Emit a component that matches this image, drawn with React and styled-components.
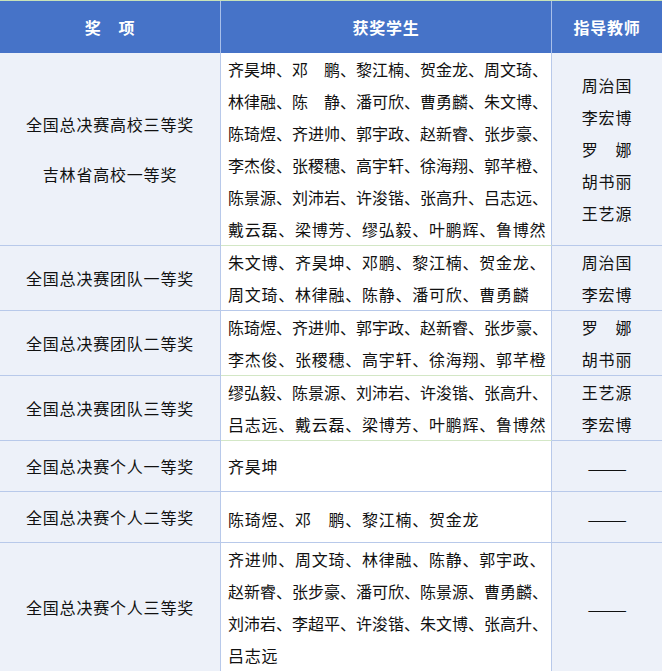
import React from "react";
import styled, { createGlobalStyle, css } from "styled-components";

const GlobalStyle = createGlobalStyle`
  html, body {
    margin: 0;
    padding: 0;
    background: #ffffff;
  }
  body {
    font-family: "Noto Sans CJK SC", "Noto Sans", sans-serif;
    color: #111111;
  }
`;

const Table = styled.div`
  width: 662px;
  display: grid;
  grid-template-columns: 221px 331px 110px;
  border-top: 1px solid #c8e2b8;
`;

const HeadCell = styled.div`
  height: 52px;
  background: #4673c8;
  color: #ffffff;
  font-weight: 700;
  font-size: 16px;
  letter-spacing: 0.8px;
  display: flex;
  align-items: center;
  justify-content: center;
  ${(p) =>
    !p.$last &&
    css`
      border-right: 1px solid #a8bfea;
    `}
`;

const Cell = styled.div`
  border-bottom: 1px solid ${(p) => (p.$green ? "#d3e7c6" : "#b8c9ea")};
  background: ${(p) => (p.$shade ? "#edf1f9" : "#ffffff")};
  min-height: 51px;
  box-sizing: border-box;
  font-size: 16px;
  line-height: 32px;
  display: flex;
  flex-direction: column;
  justify-content: center;
  ${(p) =>
    !p.$last &&
    css`
      border-right: 1px solid #b8c9ea;
    `}
`;

const AwardCell = styled(Cell)`
  align-items: center;
  gap: 18px;
  letter-spacing: 0.8px;
`;

const StudentCell = styled(Cell)`
  padding: 0 2px 0 7px;
  padding-top: ${(p) => (p.$nudge ? "4px" : "0")};
`;

const TeacherCell = styled(Cell)`
  align-items: center;
  letter-spacing: 0.8px;
`;

const Line = styled.div`
  white-space: nowrap;
  letter-spacing: ${(p) => (p.$tight ? "0px" : "0.75px")};
`;

const Dash = styled.span`
  display: inline-block;
  letter-spacing: 0;
  font-size: 17px;
  transform: scaleX(1.4);
  margin-top: 4px;
`;

const rows = [
  {
    award: ["全国总决赛高校三等奖", "吉林省高校一等奖"],
    students: [
      "齐昊坤、邓　鹏、黎江楠、贺金龙、周文琦、",
      "林律融、陈　静、潘可欣、曹勇麟、朱文博、",
      "陈琦煜、齐进帅、郭宇政、赵新睿、张步豪、",
      "李杰俊、张稷穗、高宇轩、徐海翔、郭芊橙、",
      "陈景源、刘沛岩、许浚锴、张高升、吕志远、",
      "戴云磊、梁博芳、缪弘毅、叶鹏辉、鲁博然",
    ],
    teachers: ["周治国", "李宏博", "罗　娜", "胡书丽", "王艺源"],
    green: true,
  },
  {
    award: ["全国总决赛团队一等奖"],
    students: ["朱文博、齐昊坤、邓鹏、黎江楠、贺金龙、", "周文琦、林律融、陈静、潘可欣、曹勇麟"],
    teachers: ["周治国", "李宏博"],
  },
  {
    award: ["全国总决赛团队二等奖"],
    students: ["陈琦煜、齐进帅、郭宇政、赵新睿、张步豪、", "李杰俊、张稷穗、高宇轩、徐海翔、郭芊橙"],
    teachers: ["罗　娜", "胡书丽"],
    green: true,
  },
  {
    award: ["全国总决赛团队三等奖"],
    students: ["缪弘毅、陈景源、刘沛岩、许浚锴、张高升、", "吕志远、戴云磊、梁博芳、叶鹏辉、鲁博然"],
    teachers: ["王艺源", "李宏博"],
    green: true,
  },
  {
    award: ["全国总决赛个人一等奖"],
    students: ["齐昊坤"],
    teachers: null,
  },
  {
    award: ["全国总决赛个人二等奖"],
    students: ["陈琦煜、邓　鹏、黎江楠、贺金龙"],
    teachers: null,
    nudge: true,
  },
  {
    award: ["全国总决赛个人三等奖"],
    students: [
      "齐进帅、周文琦、林律融、陈静、郭宇政、",
      "赵新睿、张步豪、潘可欣、陈景源、曹勇麟、",
      "刘沛岩、李超平、许浚锴、朱文博、张高升、",
      "吕志远",
    ],
    teachers: null,
  },
];

export default function App() {
  return (
    <>
      <GlobalStyle />
      <Table>
        <HeadCell>奖　项</HeadCell>
        <HeadCell>获奖学生</HeadCell>
        <HeadCell $last>指导教师</HeadCell>
        {rows.map((row, i) => (
          <React.Fragment key={i}>
            <AwardCell $shade>
              {row.award.map((a) => (
                <div key={a}>{a}</div>
              ))}
            </AwardCell>
            <StudentCell $green={row.green} $nudge={row.nudge}>
              {row.students.map((s, j) => (
                <Line key={j} $tight={s.length >= 20}>
                  {s}
                </Line>
              ))}
            </StudentCell>
            <TeacherCell $shade $last>
              {row.teachers ? (
                row.teachers.map((t, j) => <div key={j}>{t}</div>)
              ) : (
                <Dash>——</Dash>
              )}
            </TeacherCell>
          </React.Fragment>
        ))}
      </Table>
    </>
  );
}
